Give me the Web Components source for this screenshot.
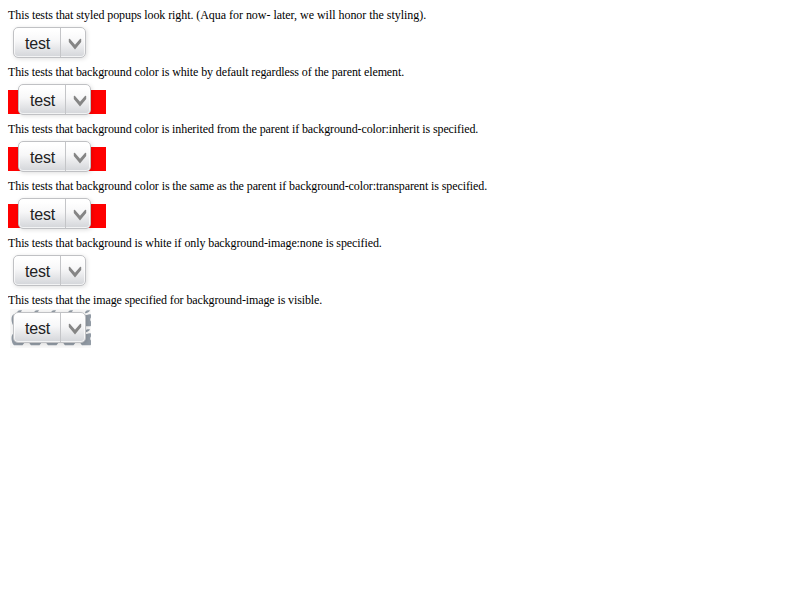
<!DOCTYPE html>
<html lang="en">
<head>
<meta charset="utf-8">
<title>Styled popups</title>
<style>body{margin:8px;background:#fff;color:#000;font:12px "Liberation Serif",serif}</style>
</head>
<body>
<popup-tests></popup-tests>
<script>
customElements.define('popup-button', class extends HTMLElement {
  constructor() {
    super();
    this.attachShadow({mode: 'open'}).innerHTML = `
      <style>
        :host{display:flex;box-sizing:border-box;width:73px;height:31px;border:1px solid #c0c1c4;border-radius:5px;
          background:linear-gradient(#fff 10%,#f7f7f8 45%,#d3d5d9);
          box-shadow:inset 0 0 0 1px rgba(255,255,255,.7),1px 1px 4px rgba(0,0,0,.13);
          font:16px/32px "Liberation Sans",sans-serif;letter-spacing:-.2px;color:#222}
        span{box-sizing:border-box;width:47px;padding-left:11px;border-right:1px solid #c4c5c8}
        svg{display:block;width:24px;height:29px}
      </style>
      <span><slot></slot></span>
      <svg viewBox="0 0 24 29"><path d="M7.8 11L8.8 10.8L14 16.8L19.2 10.8L20.2 11V14L14 21.4L7.8 14Z" fill="#858585"/></svg>`;
  }
});
customElements.define('popup-case', class extends HTMLElement {
  constructor() {
    super();
    this.attachShadow({mode: 'open'}).innerHTML = `
      <style>
        :host{display:block;height:57px}
        p{margin:0;height:14px;line-height:14px;white-space:nowrap}
        .area{display:flex;padding:5px 0 0 5px}
        :host([kind=red]) .area{width:98px;box-sizing:border-box;padding-left:10px;
          background:linear-gradient(#f00,#f00) 0 11px/98px 24px no-repeat}
        :host([kind=image]) .area{padding:0 0 0 2px}
        :host([kind=image]) .skin{position:relative;box-sizing:border-box;width:81px;height:39px;margin-top:2px;padding:3px 0 0 3px;background:#f8f8f8}
        :host([kind=image]) popup-button{position:relative}
        .pattern{display:none}
        :host([kind=image]) .pattern{display:block;position:absolute;left:0;top:0}
      </style>
      <p><slot name="description"></slot></p>
      <div class="area"><div class="skin">
        <svg class="pattern" width="81" height="37">
          <defs><pattern id="tile" x="1" y="0" width="17" height="19" patternUnits="userSpaceOnUse">
            <path d="M6 4.2Q6 1.6 9 1.3H11Q10 4 6 4.2Z" fill="#929ba5"/>
            <path d="M.5 10Q.5 5.5 4 5Q6 6.3 8 6Q10 4.7 12.5 5.5L13.5 7Q10.5 9 11.5 12L14 14L11.5 17.3H3Q.5 15 .5 10Z" fill="#929ba5"/>
          </pattern></defs>
          <rect width="81" height="37" fill="url(#tile)"/>
        </svg>
        <popup-button><slot></slot></popup-button>
      </div></div>`;
  }
});
customElements.define('popup-tests', class extends HTMLElement {
  constructor() {
    super();
    const cases = [
      ['', -.09, 'This tests that styled popups look right. <span style="letter-spacing:-.03px">(Aqua for now- later, we will honor the styling).</span>'],
      ['red', -.106, 'This tests that background color is white by default regardless of the parent element.'],
      ['red', -.107, 'This tests that background color is inherited from the parent if background-color:inherit is specified.'],
      ['red', -.1, 'This tests that background color is the same as the parent if background-color:transparent is specified.'],
      ['', -.1, 'This tests that background is white if only background-image:none is specified.'],
      ['image', -.114, 'This tests that the image specified for background-image is visible.']
    ];
    this.attachShadow({mode: 'open'}).innerHTML = '<style>:host{display:block}</style>' +
      cases.map(([kind, spacing, text]) => `<popup-case kind="${kind}"><span slot="description" style="letter-spacing:${spacing}px">${text}</span>test</popup-case>`).join('');
  }
});
</script>
</body>
</html>
